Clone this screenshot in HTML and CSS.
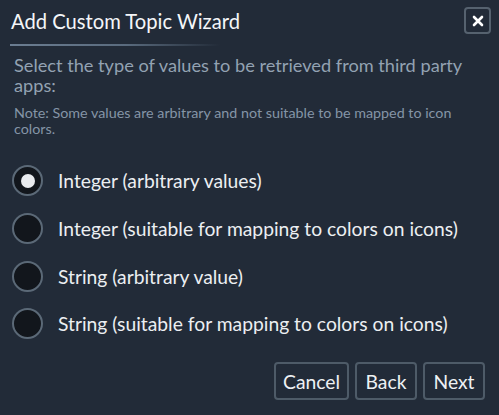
FILE: index.html
```html
<!DOCTYPE html>
<html>
<head>
<meta charset="utf-8">
<link rel="stylesheet" href="styles.css">
</head>
<body>
<div class="dialog">
  <div class="header">
    <h1 class="title">Add Custom Topic Wizard</h1>
    <button class="close" aria-label="Close">
      <svg width="12" height="12" viewBox="0 0 12 12"><path d="M2 2 L10 10 M10 2 L2 10" stroke="#ffffff" stroke-width="2.6" stroke-linecap="round"/></svg>
    </button>
  </div>
  <div class="divider"></div>
  <p class="lead">Select the type of values to be retrieved from third party apps:</p>
  <p class="note">Note: Some values are arbitrary and not suitable to be mapped to icon colors.</p>
  <div class="options">
    <label class="option"><span class="radio checked"></span><span class="label">Integer (arbitrary values)</span></label>
    <label class="option"><span class="radio"></span><span class="label">Integer (suitable for mapping to colors on icons)</span></label>
    <label class="option"><span class="radio"></span><span class="label">String (arbitrary value)</span></label>
    <label class="option"><span class="radio"></span><span class="label">String (suitable for mapping to colors on icons)</span></label>
  </div>
  <div class="footer">
    <button class="btn btn-cancel">Cancel</button>
    <button class="btn btn-back">Back</button>
    <button class="btn btn-next">Next</button>
  </div>
</div>
</body>
</html>
```
FILE: styles.css
```css
html, body {
  margin: 0;
  padding: 0;
  background: #222b38;
  width: 499px;
  height: 415px;
  overflow: hidden;
}
.dialog {
  font-family: "Lato", "Open Sans", sans-serif;
  color: #e9edf1;
  display: flex;
  flex-direction: column;
  height: 415px;
  box-sizing: border-box;
}
.header {
  display: flex;
  align-items: flex-start;
  justify-content: space-between;
  padding: 7px 8px 0 11px;
  height: 29px;
}
.title {
  margin: 1px 0 0 0;
  font-size: 20.2px;
  line-height: 26px;
  font-weight: 400;
  color: #f4f6f8;
}
.close {
  width: 27px;
  height: 27px;
  border: 2px solid #56626f;
  border-radius: 4px;
  background: #222b38;
  display: flex;
  align-items: center;
  justify-content: center;
  padding: 0;
}
.divider {
  margin: 8px 0 0 10px;
  width: 210px;
  height: 2px;
  background: linear-gradient(to right, #6b7d91 0%, #5a6b7e 55%, rgba(90,107,126,0) 100%);
}
.lead {
  margin: 9px 14px 0 14px;
  font-size: 18.2px;
  line-height: 20px;
  color: #93a2b2;
}
.note {
  margin: 10px 14px 0 14px;
  font-size: 14.3px;
  line-height: 16px;
  color: #8595a7;
}
.options {
  display: flex;
  flex-direction: column;
  gap: 16.8px;
  margin: 28px 0 0 12px;
}
.option {
  display: flex;
  align-items: center;
  gap: 15px;
  height: 31px;
  font-size: 19.3px;
}
.radio {
  width: 27px;
  height: 27px;
  border: 2px solid #5b6977;
  border-radius: 50%;
  background: #12161c;
  box-sizing: content-box;
  display: flex;
  align-items: center;
  justify-content: center;
  flex: none;
}
.radio.checked::after {
  content: "";
  width: 14px;
  height: 14px;
  border-radius: 50%;
  background: #e9ebee;
}
.label {
  color: #eceff2;
}
.footer {
  display: flex;
  justify-content: flex-end;
  gap: 6px;
  margin-top: auto;
  padding: 0 14px 15px 0;
}
.btn {
  font-family: "Lato", "Open Sans", sans-serif;
  font-size: 19.3px;
  color: #eef1f4;
  background: #222b38;
  border: 2px solid #4e5b68;
  border-radius: 4px;
  height: 38px;
  padding: 0 4px;
}
.btn-cancel { width: 75px; }
.btn-back { width: 62px; }
.btn-next { width: 62px; }
```
